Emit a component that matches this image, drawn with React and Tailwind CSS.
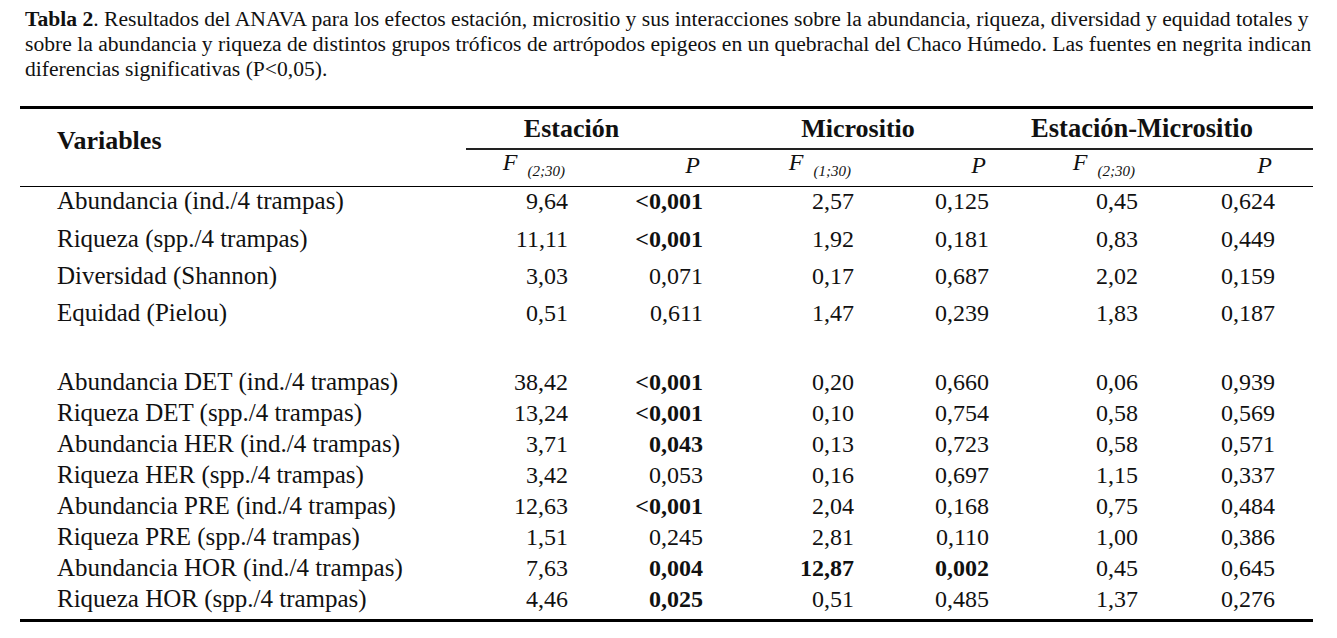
import React from 'react';

const COLS = 'grid grid-cols-[446px_102px_135px_151px_135px_149px_137px_38px]';

const group1 = [
  { name: 'Abundancia (ind./4 trampas)', v: ['9,64', '<0,001', '2,57', '0,125', '0,45', '0,624'], b: [1] },
  { name: 'Riqueza (spp./4 trampas)', v: ['11,11', '<0,001', '1,92', '0,181', '0,83', '0,449'], b: [1] },
  { name: 'Diversidad (Shannon)', v: ['3,03', '0,071', '0,17', '0,687', '2,02', '0,159'], b: [] },
  { name: 'Equidad (Pielou)', v: ['0,51', '0,611', '1,47', '0,239', '1,83', '0,187'], b: [] },
];

const group2 = [
  { name: 'Abundancia DET (ind./4 trampas)', v: ['38,42', '<0,001', '0,20', '0,660', '0,06', '0,939'], b: [1] },
  { name: 'Riqueza DET (spp./4 trampas)', v: ['13,24', '<0,001', '0,10', '0,754', '0,58', '0,569'], b: [1] },
  { name: 'Abundancia HER (ind./4 trampas)', v: ['3,71', '0,043', '0,13', '0,723', '0,58', '0,571'], b: [1] },
  { name: 'Riqueza HER (spp./4 trampas)', v: ['3,42', '0,053', '0,16', '0,697', '1,15', '0,337'], b: [] },
  { name: 'Abundancia PRE (ind./4 trampas)', v: ['12,63', '<0,001', '2,04', '0,168', '0,75', '0,484'], b: [1] },
  { name: 'Riqueza PRE (spp./4 trampas)', v: ['1,51', '0,245', '2,81', '0,110', '1,00', '0,386'], b: [] },
  { name: 'Abundancia HOR (ind./4 trampas)', v: ['7,63', '0,004', '12,87', '0,002', '0,45', '0,645'], b: [1, 2, 3] },
  { name: 'Riqueza HOR (spp./4 trampas)', v: ['4,46', '0,025', '0,51', '0,485', '1,37', '0,276'], b: [1] },
];

function Row({ row, h }) {
  return (
    <div className={`${COLS} items-start leading-[28px] ${h}`}>
      <div className="pl-[37px] text-[25px] whitespace-nowrap">{row.name}</div>
      {row.v.map((val, i) => (
        <div
          key={i}
          className={`text-right text-[24px] ${row.b.includes(i) ? 'font-bold' : ''}`}
        >
          {val}
        </div>
      ))}
      <div />
    </div>
  );
}

function FLabel({ df }) {
  return (
    <div className="text-right pr-[3px] text-[24px] leading-[28px] italic whitespace-nowrap -mt-[2px]">
      F<span className="text-[15px] ml-[10px] align-[-6px]">{df}</span>
    </div>
  );
}

function PLabel() {
  return <div className="text-right pr-[3px] text-[24px] leading-[28px] italic -mt-[6px]">P</div>;
}

export default function App() {
  const heights1 = ['h-[38px]', 'h-[37px]', 'h-[37px]', 'h-[37px]'];
  return (
    <div className="min-h-screen bg-white text-[#111] font-['Liberation_Serif',serif] pl-[20px] pr-[24px] pt-[7px]">
      {/* caption */}
      <div className="pl-[5px] text-[21.6px] leading-[25px] whitespace-nowrap">
        <div>
          <span className="font-bold">Tabla 2</span>. Resultados del ANAVA para los efectos estación, micrositio y sus interacciones sobre la abundancia, riqueza, diversidad y equidad totales y
        </div>
        <div>
          sobre la abundancia y riqueza de distintos grupos tróficos de artrópodos epigeos en un quebrachal del Chaco Húmedo. Las fuentes en negrita indican
        </div>
        <div>diferencias significativas (P&lt;0,05).</div>
      </div>

      <div className="mt-[24px] h-[3px] bg-black" />

      {/* header */}
      <div className={`${COLS} grid-rows-[39px_1.5px_36px]`}>
        <div className="row-span-3 pl-[37px] pt-[17px] text-[26px] leading-[30px] font-bold">Variables</div>
        <div className="col-span-2 flex items-center justify-center pr-[26px] text-[26px] font-bold">Estación</div>
        <div className="col-span-2 flex items-center justify-center pl-[24px] text-[26px] font-bold">Micrositio</div>
        <div className="col-span-3 flex items-center justify-center pr-[18px] text-[26.5px] font-bold">Estación-Micrositio</div>
        <div className="col-span-7 bg-[#222]" />
        <div className="flex items-center justify-end"><FLabel df="(2;30)" /></div>
        <div className="flex items-center justify-end"><PLabel /></div>
        <div className="flex items-center justify-end"><FLabel df="(1;30)" /></div>
        <div className="flex items-center justify-end"><PLabel /></div>
        <div className="flex items-center justify-end"><FLabel df="(2;30)" /></div>
        <div className="flex items-center justify-end"><PLabel /></div>
        <div />
      </div>
      <div className="h-px bg-black" />

      {/* body */}
      {group1.map((r, i) => (
        <Row key={r.name} row={r} h={heights1[i]} />
      ))}
      <div className="h-[32px]" />
      {group2.map((r) => (
        <Row key={r.name} row={r} h="h-[31px]" />
      ))}
      <div className="h-[3px]" />
      <div className="h-[3px] bg-black" />
    </div>
  );
}
